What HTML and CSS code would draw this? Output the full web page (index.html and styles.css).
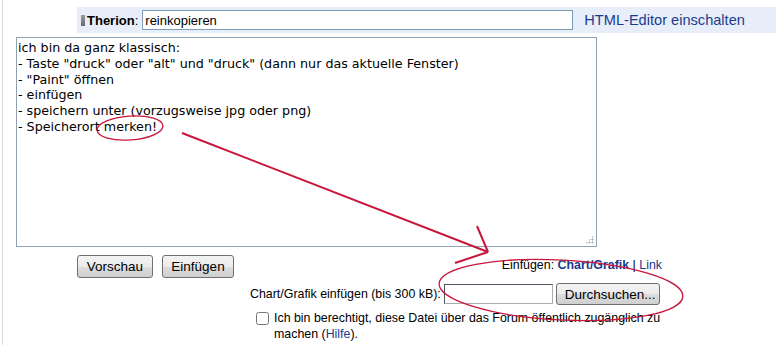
FILE: index.html
```html
<!DOCTYPE html>
<html lang="de">
<head>
  <meta charset="UTF-8">
  <title>Antworten</title>
  <link rel="stylesheet" href="styles.css">
</head>
<body>
  <div class="page">
    <div class="topbar">
      <span class="grip"></span>
      <span class="author">Therion</span><span class="colon">:</span>
      <input class="subject" type="text" value="reinkopieren">
      <a class="editor-link" href="#">HTML-Editor einschalten</a>
    </div>

    <div class="message-box">
      <textarea class="message">ich bin da ganz klassisch:
- Taste "druck" oder "alt" und "druck" (dann nur das aktuelle Fenster)
- "Paint" öffnen
- einfügen
- speichern unter (vorzugsweise jpg oder png)
- Speicherort merken!</textarea>
      <span class="resize-grip"></span>
    </div>

    <div class="actions">
      <div class="buttons">
        <button class="btn btn-preview">Vorschau</button>
        <button class="btn btn-insert">Einfügen</button>
      </div>
      <div class="insert-links">Einfügen: <a class="active" href="#">Chart/Grafik</a> | <a href="#">Link</a></div>
    </div>

    <div class="upload">
      <div class="upload-row">
        <label>Chart/Grafik einfügen (bis 300 kB):</label>
        <input class="file-name" type="text">
        <button class="btn btn-browse">Durchsuchen...</button>
      </div>
      <div class="check-row">
        <input type="checkbox" class="check">
        <span class="check-text">Ich bin berechtigt, diese Datei über das Forum öffentlich zugänglich zu machen (<a href="#">Hilfe</a>).</span>
      </div>
    </div>

    <!-- hand drawn markup on top of the screenshot -->
    <svg class="scribble" width="784" height="350" viewBox="0 0 784 350">
      <g fill="none" stroke="#c8163c" stroke-width="1.3">
        <ellipse cx="130" cy="128" rx="33" ry="12" transform="rotate(-4 130 128)"/>
        <line x1="182" y1="133" x2="488" y2="252" stroke-width="2"/>
        <line x1="477" y1="226" x2="488" y2="252" stroke-width="2"/>
        <line x1="455" y1="263" x2="488" y2="252" stroke-width="2"/>
        <ellipse cx="561" cy="290" rx="122" ry="30" transform="rotate(3 561 290)"/>
      </g>
    </svg>
  </div>
</body>
</html>
```

FILE: styles.css
```css
body {
  margin: 0;
  background-color: #fff;
  font-family: "Liberation Sans", Arial, sans-serif;
  font-size: 12.4px;
  color: #000;
  overflow: hidden;
}
a {
  color: #1c3a8c;
  text-decoration: none;
}
.page {
  position: relative;
  margin-left: 2px;
  height: 345px;
  border-left: 1px solid #dcdcdc;
  padding-top: 7px;
  box-sizing: border-box;
}
.topbar {
  display: flex;
  align-items: center;
  margin-left: 74px;
  width: 699px;
  height: 26px;
  background-color: #e8eef9;
}
.grip {
  width: 4px;
  height: 11px;
  margin-left: 4px;
  margin-right: 2px;
  background: linear-gradient(#9a9a9a, #6a6a6a);
}
.author {
  font-size: 13px;
  font-weight: bold;
}
.colon {
  font-size: 13px;
  margin-right: 4px;
}
.subject {
  width: 431px;
  height: 20px;
  padding: 0 2px;
  box-sizing: border-box;
  border: 1px solid #7f9db9;
  font-family: "Liberation Sans", Arial, sans-serif;
  font-size: 13px;
}
.editor-link {
  margin-left: 11px;
  font-size: 14.6px;
}
.message-box {
  position: relative;
  width: 581px;
  margin: 4px 0 0 13px;
}
.message {
  display: block;
  width: 581px;
  height: 210px;
  box-sizing: border-box;
  border: 1px solid #8ea1b5;
  padding: 2px 1px;
  font-family: "DejaVu Sans", Verdana, sans-serif;
  font-size: 12.7px;
  line-height: 15.8px;
  resize: none;
}
.resize-grip {
  position: absolute;
  right: 3px;
  bottom: 3px;
  width: 9px;
  height: 9px;
  background: radial-gradient(circle, #a8a8a8 0.8px, transparent 1.2px) 0 0 / 3px 3px;
  clip-path: polygon(100% 0, 100% 100%, 0 100%);
}
.actions {
  display: flex;
  align-items: flex-end;
  width: 659px;
  margin-top: 8px;
}
.buttons {
  display: flex;
  gap: 9px;
  margin-left: 74px;
}
.btn {
  height: 23px;
  padding: 0 8px;
  border: 1px solid #707070;
  border-radius: 3px;
  background: linear-gradient(#f3f3f3 0%, #ebebeb 50%, #dddddd 51%, #cfcfcf 100%);
  font-family: "Liberation Sans", Arial, sans-serif;
  font-size: 13.5px;
  color: #000;
}
.btn-preview {
  width: 76px;
}
.btn-insert {
  width: 72px;
}
.insert-links {
  margin-left: auto;
  padding-bottom: 6px;
}
.insert-links .active {
  font-weight: bold;
}
.upload {
  margin-left: 247px;
  margin-top: 5px;
}
.upload-row {
  display: flex;
  align-items: center;
}
.file-name {
  width: 109px;
  height: 20px;
  margin-left: 3px;
  box-sizing: border-box;
  border: 1px solid #abadb3;
  border-top-color: #4a5560;
  border-left-color: #4a5560;
}
.btn-browse {
  width: 104px;
  height: 22px;
  margin-left: 3px;
}
.check-row {
  display: flex;
  align-items: flex-start;
  margin-top: 5px;
  margin-left: 6px;
  width: 410px;
}
.check {
  width: 13px;
  height: 13px;
  margin: 2px 5px 0 0;
}
.check-text {
  line-height: 16px;
}
.scribble {
  position: absolute;
  left: -3px;
  top: 0;
  pointer-events: none;
}
```
